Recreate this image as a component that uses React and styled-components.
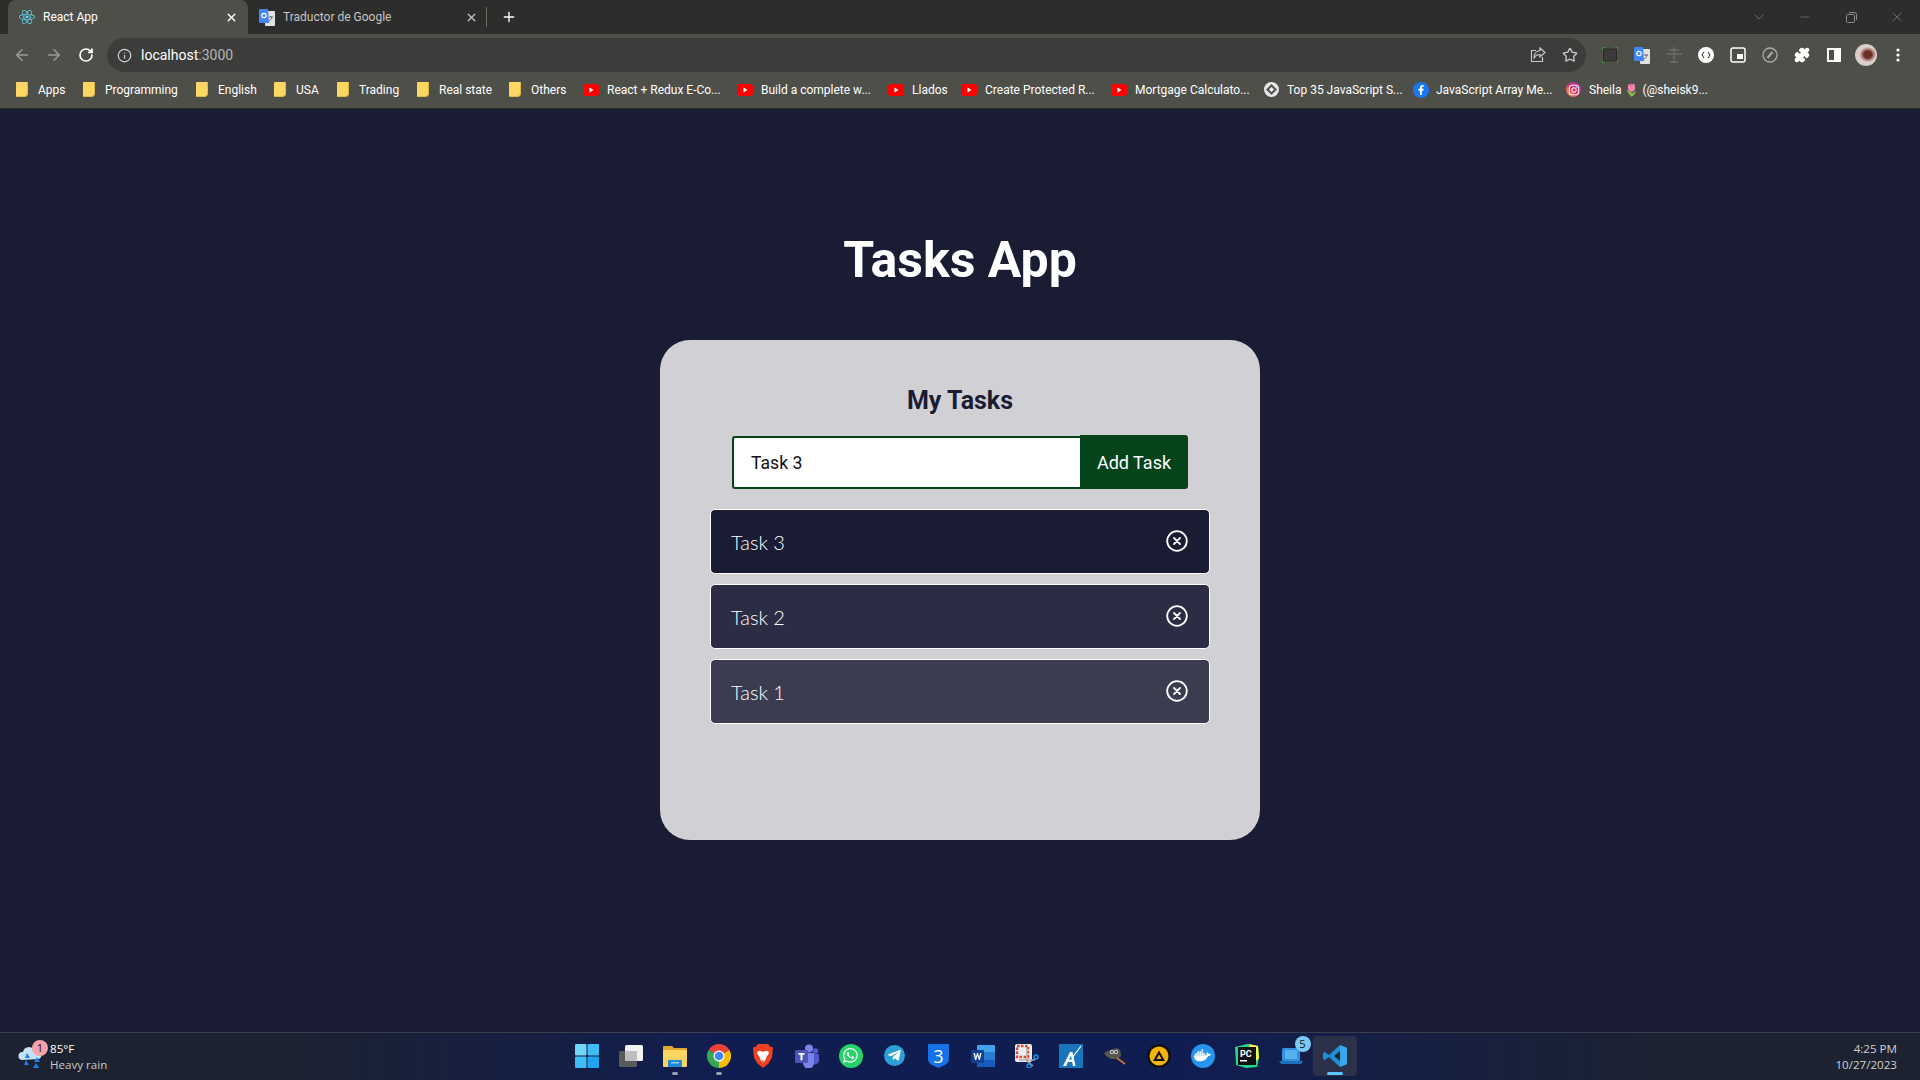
import React from "react";
import styled, { createGlobalStyle } from "styled-components";
import {
  ArrowLeft,
  ArrowRight,
  RotateCw,
  Info,
  Star,
  X,
  Plus,
  Minus,
  ChevronDown,
  Puzzle,
} from "lucide-react";
import { FaWhatsapp, FaTelegramPlane, FaDocker, FaFacebookF, FaInstagram, FaReact } from "react-icons/fa";

const GlobalStyle = createGlobalStyle`
  html, body { margin: 0; padding: 0; height: 100%; background: #1a1c33; overflow: hidden; }
  * { box-sizing: border-box; }
  #root { height: 100%; }
`;

const Page = styled.div`
  height: 100vh;
  display: flex;
  flex-direction: column;
  font-family: Roboto, "Liberation Sans", sans-serif;
`;

/* browser chrome */
const TabStrip = styled.div`
  height: 34px;
  flex: none;
  background: #2d2d2b;
  display: flex;
  padding-left: 8px;
  color: #fff;
`;

const Tab = styled.div`
  width: 240px;
  height: 34px;
  display: flex;
  align-items: center;
  padding: 0 10px 0 11px;
  gap: 8px;
  font-size: 12px;
  border-radius: 8px 8px 0 0;
  background: ${(p) => (p.$active ? "#4f4f4a" : "transparent")};
  color: ${(p) => (p.$active ? "#fff" : "#c4c4c2")};
  span { flex: 1; }
  svg.close { color: ${(p) => (p.$active ? "#fff" : "#bbb")}; }
`;

const TabDivider = styled.div`
  width: 1px;
  height: 20px;
  background: #6b6b68;
  align-self: center;
  margin-left: -2px;
`;

const NewTab = styled.div`
  width: 44px;
  display: flex;
  align-items: center;
  justify-content: center;
`;

const WindowControls = styled.div`
  margin-left: auto;
  display: flex;
  align-items: center;
  color: #8b8b89;
`;

const WindowButton = styled.div`
  width: 46px;
  height: 28px;
  display: flex;
  align-items: center;
  justify-content: center;
`;

const Toolbar = styled.div`
  height: 40px;
  flex: none;
  background: #4f4f4a;
  display: flex;
  align-items: center;
  padding: 2px 6px 0 6px;
  color: #fff;
`;

const ToolButton = styled.div`
  width: 32px;
  height: 32px;
  flex: none;
  display: flex;
  align-items: center;
  justify-content: center;
  color: ${(p) => p.$color || "#fff"};
`;

const UrlBar = styled.div`
  flex: 1;
  height: 34px;
  margin: 0 8px 0 5px;
  border-radius: 17px;
  background: #3c3c3a;
  display: flex;
  align-items: center;
  padding-left: 10px;
  font-size: 14px;
  color: #fff;
  em { font-style: normal; color: #b5b5b3; }
`;

const UrlText = styled.div`
  flex: 1;
  margin-left: 9px;
`;

const UrlIcon = styled.div`
  width: 32px;
  display: flex;
  justify-content: center;
  color: #c8c8c6;
`;

const Avatar = styled.div`
  width: 22px;
  height: 22px;
  border-radius: 50%;
  background: radial-gradient(ellipse at 58% 48%, #6b2f28 0 22%, #a8796f 32%, #ddd3ce 48%, #c7bbb6 100%);
`;

const BookmarkBar = styled.div`
  height: 35px;
  flex: none;
  background: #4f4f4a;
  border-bottom: 1px solid #2a2a2a;
  display: flex;
  align-items: center;
  padding: 0 0 3px 16px;
  color: #fff;
  font-size: 12px;
`;

const Bookmark = styled.div`
  width: ${(p) => p.$w}px;
  flex: none;
  display: flex;
  align-items: center;
  gap: ${(p) => p.$gap || 10}px;
  white-space: nowrap;
`;

const FolderIcon = styled.div`
  width: 12px;
  height: 15px;
  background: #fdd663;
  border-radius: 1px 1px 4px 1px;
  border-right: 1px solid #e2b945;
  border-bottom: 1px solid #e2b945;
`;

/* app */
const Main = styled.main`
  flex: 1;
  display: flex;
  flex-direction: column;
  align-items: center;
  padding-top: 123px;
  background: #1a1c33;
`;

const Title = styled.h1`
  margin: 0 0 52px;
  font-size: 50px;
  line-height: 56px;
  font-weight: 700;
  color: #fff;
`;

const Card = styled.section`
  width: 600px;
  height: 500px;
  border-radius: 30px;
  background: #d1d0d5;
  padding-top: 47px;
  display: flex;
  flex-direction: column;
  align-items: center;
`;

const CardTitle = styled.h2`
  margin: 0 0 20px;
  font-size: 25px;
  line-height: 28px;
  font-weight: 700;
  color: #1a1c33;
`;

const Form = styled.form`
  width: 456px;
  display: flex;
  align-items: flex-end;
  margin-bottom: 20px;
`;

const Input = styled.input`
  flex: 1;
  min-width: 0;
  height: 53px;
  border: 2px solid #05441a;
  border-right: none;
  border-radius: 3px 0 0 3px;
  padding: 0 0 0 17px;
  font-family: Roboto, sans-serif;
  font-size: 17.6px;
  color: #111;
  background: #fff;
  outline: none;
`;

const AddButton = styled.button`
  width: 108px;
  height: 54px;
  border: none;
  border-radius: 0 3px 3px 0;
  background: #05441a;
  color: #fff;
  font-family: Roboto, sans-serif;
  font-size: 18px;
  font-weight: 400;
  padding: 0;
`;

const TaskList = styled.ul`
  list-style: none;
  margin: 0;
  padding: 0;
  width: 500px;
  display: flex;
  flex-direction: column;
  gap: 10px;
`;

const TaskRow = styled.li`
  height: 65px;
  border: 1px solid #fff;
  border-radius: 5px;
  background: ${(p) => p.$bg};
  color: #fff;
  display: flex;
  align-items: center;
  justify-content: space-between;
  padding: 0 21px 0 20px;
  font-family: Lato, sans-serif;
  font-weight: 300;
  font-size: 20px;
`;

const RemoveIcon = styled.svg`
  width: 22px;
  height: 22px;
  margin-top: -2px;
  fill: none;
  stroke: #fff;
  stroke-width: 1.8;
  stroke-linecap: round;
`;

/* taskbar */
const Taskbar = styled.footer`
  height: 48px;
  flex: none;
  border-top: 1px solid #3b3c4c;
  background: linear-gradient(90deg, #1c2230 0%, #1c2230 14%, #101d50 38%, #101d50 62%, #1c2230 88%, #1c2230 100%);
  display: grid;
  grid-template-columns: 1fr auto 1fr;
  align-items: center;
  padding-bottom: 2px;
  font-family: "Open Sans", sans-serif;
  font-size: 11.6px;
  color: #fff;
`;

const Weather = styled.div`
  display: flex;
  align-items: center;
  gap: 6px;
  padding: 2px 0 0 18px;
  line-height: 16px;
`;

const WeatherIcon = styled.div`
  position: relative;
  width: 26px;
  height: 26px;
`;

const Badge = styled.span`
  position: absolute;
  top: ${(p) => p.$top}px;
  right: ${(p) => p.$right}px;
  width: 16px;
  height: 16px;
  border-radius: 50%;
  background: ${(p) => p.$bg};
  color: #111;
  font-size: 11px;
  line-height: 16px;
  text-align: center;
`;

const Muted = styled.div`
  color: #c9c9cc;
`;

const TaskIcons = styled.div`
  display: flex;
  align-items: center;
  margin-left: 1px;
`;

const TaskIcon = styled.div`
  position: relative;
  width: 44px;
  height: 40px;
  display: flex;
  align-items: center;
  justify-content: center;
  border-radius: 4px;
  background: ${(p) => (p.$active ? "#2a3149" : "transparent")};
  &::after {
    content: "";
    display: ${(p) => (p.$open || p.$active ? "block" : "none")};
    position: absolute;
    bottom: 1px;
    left: 50%;
    transform: translateX(-50%);
    width: ${(p) => (p.$active ? 16 : 6)}px;
    height: 3px;
    border-radius: 2px;
    background: ${(p) => (p.$active ? "#5cc8fa" : "#9aa0ae")};
  }
`;

const Clock = styled.div`
  justify-self: end;
  padding: 2px 23px 0 0;
  text-align: right;
  line-height: 16px;
  color: #d0d0d2;
`;

const Round = styled.div`
  width: ${(p) => p.$size || 24}px;
  height: ${(p) => p.$size || 24}px;
  border-radius: 50%;
  background: ${(p) => p.$bg};
  color: #fff;
  display: flex;
  align-items: center;
  justify-content: center;
  font-size: ${(p) => (p.$size || 24) * 0.7}px;
`;

const ShieldWrap = styled.div`
  position: relative;
  width: 21px;
  height: 24px;
  display: flex;
  align-items: center;
  justify-content: center;
  color: #fff;
  font-size: 18px;
  font-weight: 500;
  svg { position: absolute; inset: 0; }
  span { position: relative; }
`;

const Youtube = () => (
  <svg width="16" height="12" viewBox="0 0 16 12">
    <rect width="16" height="12" rx="3" fill="#f00" />
    <path d="M6.5 3.6 10.5 6l-4 2.4z" fill="#fff" />
  </svg>
);

const GoogleTranslate = () => (
  <svg width="16" height="17" viewBox="0 0 16 17">
    <rect x="6" y="2" width="10" height="15" rx="1" fill="#dfe1e5" />
    <path d="M1 0h8l1 14H1a1 1 0 0 1-1-1V1a1 1 0 0 1 1-1z" fill="#4285f4" />
    <circle cx="5" cy="6.5" r="2.2" fill="none" stroke="#fff" strokeWidth="1.2" />
    <path d="M10 8h4M12 7v1M13 8c-.5 2-1.500 3-3 4" stroke="#666" fill="none" />
  </svg>
);

const Chrome = () => (
  <svg width="24" height="24" viewBox="0 0 24 24">
    <path d="M12 12 1.600 6A12 12 0 0 1 22.400 6z" fill="#ea4335" />
    <path d="M12 12 22.400 6A12 12 0 0 1 12 24z" fill="#fbbc04" />
    <path d="M12 12 12 24A12 12 0 0 1 1.600 6z" fill="#34a853" />
    <circle cx="12" cy="12" r="5.500" fill="#fff" />
    <circle cx="12" cy="12" r="4.300" fill="#4285f4" />
  </svg>
);

const WindowsLogo = () => (
  <svg width="24" height="24" viewBox="0 0 24 24">
    <rect width="11.500" height="11.500" rx="1" fill="#6fd6f8" />
    <rect x="12.500" width="11.500" height="11.500" rx="1" fill="#3fbdf5" />
    <rect y="12.500" width="11.500" height="11.500" rx="1" fill="#3fbdf5" />
    <rect x="12.500" y="12.500" width="11.500" height="11.500" rx="1" fill="#1ea5ee" />
  </svg>
);

const TaskView = () => (
  <svg width="24" height="24" viewBox="0 0 24 24">
    <rect x="6" y="1" width="18" height="16" rx="1.500" fill="#f2f2f2" />
    <rect x="0" y="7" width="18" height="16" rx="1.500" fill="#5a5a5a" />
    <rect x="6" y="7" width="12" height="10" fill="#bdbdbd" />
  </svg>
);

const Explorer = () => (
  <svg width="24" height="24" viewBox="0 0 24 24">
    <path d="M0 3a1 1 0 0 1 1-1h8l2 2h12a1 1 0 0 1 1 1v17H0z" fill="#e0a82e" />
    <rect y="6" width="24" height="17" rx="1" fill="#fcd462" />
    <rect x="5" y="16" width="14" height="7" rx="1" fill="#1e88d8" />
    <rect x="8" y="18" width="8" height="1.500" fill="#8fd0f8" />
  </svg>
);

const Brave = () => (
  <svg width="20" height="24" viewBox="0 0 20 24">
    <path d="M5 0h10l2 2.500 3 1-1 10-3.500 6L10 24l-5.500-4.500L1 13.500 0 3.500l3-1z" fill="#f1401f" />
    <path d="M5 7h3l2 1 2-1h3l1 2-3 5-1 3-2 2-2-2-1-3-3-5z" fill="#fff" />
    <path d="M8.500 16.500h3L10 19z" fill="#f1401f" />
  </svg>
);

const Teams = () => (
  <svg width="24" height="24" viewBox="0 0 24 24">
    <circle cx="14" cy="4.500" r="4" fill="#7b83eb" />
    <circle cx="20.500" cy="7" r="2.800" fill="#5059c9" />
    <path d="M17 10h7v7a4 4 0 0 1-7 2z" fill="#5059c9" />
    <path d="M8 9h11v10a5.500 5.500 0 0 1-11 0z" fill="#7b83eb" />
    <rect x="0" y="6" width="13" height="13" rx="1.500" fill="#4b53bc" />
    <path d="M3.500 9h6v1.800H7.500v5.500h-2v-5.500h-2z" fill="#fff" />
  </svg>
);

const Word = () => (
  <svg width="24" height="24" viewBox="0 0 24 24">
    <rect x="6" y="1" width="18" height="22" rx="1" fill="#41a5ee" />
    <rect x="6" y="8" width="18" height="7.500" fill="#2b7cd3" />
    <rect x="6" y="15.500" width="18" height="7.500" fill="#185abd" />
    <rect x="0" y="6" width="13" height="13" rx="1" fill="#103f91" />
    <path d="M2.500 9l1.500 7h1.200l1.300-4.500 1.300 4.500H9l1.500-7H9l-.8 4.500L7 9H6l-1.200 4.500L4 9z" fill="#fff" />
  </svg>
);

const Snip = () => (
  <svg width="24" height="24" viewBox="0 0 24 24">
    <rect width="17" height="18" rx="2" fill="#eee" />
    <rect x="2" y="2" width="11" height="11" fill="none" stroke="#e0452c" strokeWidth="2.500" strokeDasharray="2.500 1.500" />
    <path d="M12 4v13l6 5M4 16h16" stroke="#aaa" strokeWidth="1.500" fill="none" />
    <circle cx="21" cy="13" r="2" fill="none" stroke="#1e90e0" strokeWidth="1.500" />
    <circle cx="14" cy="22" r="2" fill="none" stroke="#1e90e0" strokeWidth="1.500" />
  </svg>
);

const Arch = () => (
  <svg width="24" height="24" viewBox="0 0 24 24">
    <rect width="24" height="24" fill="#1976bd" />
    <path d="M4 22 11 8h2.500l3 14H14l-.8-4H9l-2 4zM10 15.500h2.800L12 11.500z" fill="#fff" fillRule="evenodd" />
    <path d="M13 14 22 2" stroke="#fff" strokeWidth="1.200" />
  </svg>
);

const Gimp = () => (
  <svg width="24" height="20" viewBox="0 0 24 20">
    <path d="M1 7l6-3 7-2 3 2 1 6-4 3H8L3 10z" fill="#5a5750" />
    <circle cx="9" cy="6" r="2" fill="#ddd" />
    <circle cx="13" cy="6" r="2" fill="#ddd" />
    <circle cx="9" cy="6" r=".9" fill="#111" />
    <circle cx="13" cy="6" r=".9" fill="#111" />
    <path d="M14 12l8 6" stroke="#c8752d" strokeWidth="1.800" />
  </svg>
);

const Amp = () => (
  <svg width="24" height="24" viewBox="0 0 24 24">
    <circle cx="12" cy="12" r="12" fill="#111" />
    <circle cx="12" cy="12" r="9.500" fill="#f5b50e" />
    <path d="M12 6.500 18 17H6zM12 10.500 9.500 15h5z" fill="#111" fillRule="evenodd" />
  </svg>
);

const PyCharm = () => (
  <svg width="24" height="24" viewBox="0 0 24 24">
    <path d="M0 3l12-3 11 2 1 12-2 9-11 1-10-3z" fill="#21d789" />
    <path d="M14 0l9 2 1 12-4 4z" fill="#fcf84a" />
    <rect x="3" y="3" width="18" height="18" fill="#111" />
    <text x="5" y="13" fontSize="9" fontFamily="Roboto, sans-serif" fontWeight="700" fill="#fff">PC</text>
    <rect x="5" y="16" width="7" height="1.500" fill="#fff" />
  </svg>
);

const Outlook = () => (
  <svg width="24" height="24" viewBox="0 0 24 24">
    <rect x="3" y="4" width="18" height="13" rx="1.500" fill="#2f8fe0" />
    <path d="M0 17h24l-2 3H2z" fill="#1f6fbd" />
    <rect x="6" y="6" width="12" height="9" fill="#56b1f0" />
  </svg>
);

const VsCode = () => (
  <svg width="24" height="24" viewBox="0 0 24 24">
    <path d="M17 1 24 4v16l-7 3L6 13l-4 3-2-1V9l2-1 4 3z" fill="#1e8ed6" />
    <path d="M17 1 24 4v16l-7 3z" fill="#3aa6ec" />
    <path d="M17 7v10l-6-5z" fill="#1a2236" />
  </svg>
);

const WeatherGlyph = () => (
  <svg width="26" height="26" viewBox="0 0 26 26">
    <path d="M4 16a4 4 0 0 1 1-8 6 6 0 0 1 11-2 5 5 0 0 1 5 9z" fill="#c5e3f8" />
    <path d="M9 9l3 5H7zM8 16l3 5H6zM19 13l3 5h-6zM18 19l3 5h-6z" fill="#1f7fee" />
  </svg>
);

const ShareGlyph = () => (
  <svg width="16" height="16" viewBox="0 0 16 16" fill="none" stroke="currentColor" strokeWidth="1.200">
    <path d="M6 3.500H1.500v11h11V10" />
    <path d="M10 1l5 4.500L10 10V7.500C7 7.500 5 9 4 11.500 4 7 6.500 3.800 10 3.500z" />
  </svg>
);

const CssShield = () => (
  <ShieldWrap>
    <svg width="21" height="24" viewBox="0 0 21 24">
      <path d="M0 0h21v15c0 3-2 5-4 6l-6.500 3L4 21c-2-1-4-3-4-6z" fill="#1572e8" />
    </svg>
    <span>3</span>
  </ShieldWrap>
);

const bookmarks = [
  { name: "Apps", w: 67 },
  { name: "Programming", w: 113 },
  { name: "English", w: 78 },
  { name: "USA", w: 63 },
  { name: "Trading", w: 80 },
  { name: "Real state", w: 92 },
  { name: "Others", w: 74 },
  { name: "React + Redux E-Co...", w: 154, icon: <Youtube />, gap: 8 },
  { name: "Build a complete w...", w: 151, icon: <Youtube />, gap: 8 },
  { name: "Llados", w: 73, icon: <Youtube />, gap: 8 },
  { name: "Create Protected R...", w: 150, icon: <Youtube />, gap: 8 },
  { name: "Mortgage Calculato...", w: 153, icon: <Youtube />, gap: 8 },
  { name: "Top 35 JavaScript S...", w: 149, icon: <Round $size={15} $bg="#e8e8e8"><svg width="11" height="11" viewBox="0 0 11 11"><path d="M5.500 0 11 5.500 5.500 11 0 5.500z" fill="#555" /><path d="M5.500 3 8 5.500 5.500 8 3 5.500z" fill="#eee" /></svg></Round>, gap: 8 },
  { name: "JavaScript Array Me...", w: 153, icon: <Round $size={16} $bg="#1877f2"><FaFacebookF size={10} /></Round>, gap: 7 },
  { name: "Sheila 🌷 (@sheisk9...", w: 150, icon: <Round $size={15} $bg="linear-gradient(45deg,#fcb045,#e1306c,#833ab4)"><FaInstagram size={12} /></Round>, gap: 8 },
];

const tasks = [
  { name: "Task 3", bg: "#1a1c33" },
  { name: "Task 2", bg: "#2c2c44" },
  { name: "Task 1", bg: "#3c3c50" },
];

const dock = [
  { icon: <WindowsLogo /> },
  { icon: <TaskView /> },
  { icon: <Explorer />, open: true },
  { icon: <Chrome />, open: true },
  { icon: <Brave /> },
  { icon: <Teams /> },
  { icon: <Round $bg="#25d366"><FaWhatsapp /></Round> },
  { icon: <Round $size={21} $bg="#2a9fd8"><FaTelegramPlane /></Round> },
  { icon: <CssShield /> },
  { icon: <Word /> },
  { icon: <Snip /> },
  { icon: <Arch /> },
  { icon: <Gimp /> },
  { icon: <Amp /> },
  { icon: <Round $bg="#2496ed"><FaDocker /></Round> },
  { icon: <PyCharm /> },
  { icon: <Outlook />, badge: "5" },
  { icon: <VsCode />, active: true },
];

const RemoveGlyph = () => (
  <RemoveIcon viewBox="0 0 22 22">
    <circle cx="11" cy="11" r="9.800" />
    <path d="M8 8l6 6M14 8l-6 6" />
  </RemoveIcon>
);

export default function App() {
  return (
    <Page>
      <GlobalStyle />
      <TabStrip>
        <Tab $active>
          <FaReact size={16} color="#61dafb" />
          <span>React App</span>
          <X className="close" size={13} strokeWidth={2.5} />
        </Tab>
        <Tab>
          <GoogleTranslate />
          <span>Traductor de Google</span>
          <X className="close" size={13} strokeWidth={2.5} />
        </Tab>
        <TabDivider />
        <NewTab>
          <Plus size={16} strokeWidth={2} />
        </NewTab>
        <WindowControls>
          <WindowButton><ChevronDown size={16} strokeWidth={1} /></WindowButton>
          <WindowButton><Minus size={14} strokeWidth={1} /></WindowButton>
          <WindowButton>
            <svg width="11" height="11" viewBox="0 0 11 11" fill="none" stroke="currentColor">
              <rect x=".5" y="2.500" width="8" height="8" rx="1" />
              <path d="M3 .5h5.500a2 2 0 0 1 2 2V8" />
            </svg>
          </WindowButton>
          <WindowButton><X size={16} strokeWidth={1} /></WindowButton>
        </WindowControls>
      </TabStrip>

      <Toolbar>
        <ToolButton $color="#9a9a97"><ArrowLeft size={18} /></ToolButton>
        <ToolButton $color="#9a9a97"><ArrowRight size={18} /></ToolButton>
        <ToolButton><RotateCw size={16} strokeWidth={2.5} /></ToolButton>
        <UrlBar>
          <Info size={15} color="#cfcfcd" />
          <UrlText>localhost<em>:3000</em></UrlText>
          <UrlIcon><ShareGlyph /></UrlIcon>
          <UrlIcon><Star size={16} /></UrlIcon>
        </UrlBar>
        <ToolButton>
          <svg width="16" height="16" viewBox="0 0 16 16" fill="none">
            <rect x="1.500" y="2" width="13" height="12" fill="#3a3a38" stroke="#2b2b29" />
            <path d="M.5 3V.5h2.500M13 .5h2.500V3M.5 13v2.500H3M13 15.500h2.500V13" stroke="#3f8a35" />
          </svg>
        </ToolButton>
        <ToolButton><GoogleTranslate /></ToolButton>
        <ToolButton $color="#777">
          <svg width="16" height="16" viewBox="0 0 16 16" fill="none" stroke="currentColor">
            <path d="M8 0v16M4 15h8M0 7h16M3 3h10" />
          </svg>
        </ToolButton>
        <ToolButton>
          <Round $size={16} $bg="#fff">
            <svg width="10" height="10" viewBox="0 0 10 10" fill="none" stroke="#222"><path d="M3 2 1 5l2 3M7 2l2 3-2 3" /></svg>
          </Round>
        </ToolButton>
        <ToolButton>
          <svg width="16" height="16" viewBox="0 0 16 16" fill="none">
            <rect x="1" y="1" width="14" height="14" rx="2" stroke="#fff" strokeWidth="1.500" />
            <rect x="7" y="7" width="6" height="5" fill="#fff" />
          </svg>
        </ToolButton>
        <ToolButton $color="#aaa">
          <svg width="16" height="16" viewBox="0 0 16 16" fill="none" stroke="currentColor" strokeWidth="1.300">
            <circle cx="8" cy="8" r="7" />
            <path d="M5.500 11 10.500 5" strokeWidth="2" />
          </svg>
        </ToolButton>
        <ToolButton><Puzzle size={16} fill="#fff" /></ToolButton>
        <ToolButton>
          <svg width="14" height="14" viewBox="0 0 14 14"><path d="M0 0h14v14H0zM2 2v10h5V2z" fill="#fff" fillRule="evenodd" /></svg>
        </ToolButton>
        <ToolButton><Avatar /></ToolButton>
        <ToolButton>
          <svg width="4" height="16" viewBox="0 0 4 16" fill="#fff">
            <circle cx="2" cy="3" r="1.600" />
            <circle cx="2" cy="8" r="1.600" />
            <circle cx="2" cy="13" r="1.600" />
          </svg>
        </ToolButton>
      </Toolbar>

      <BookmarkBar>
        {bookmarks.map((b) => (
          <Bookmark key={b.name} $w={b.w} $gap={b.gap}>
            {b.icon || <FolderIcon />}
            {b.name}
          </Bookmark>
        ))}
      </BookmarkBar>

      <Main>
        <Title>Tasks App</Title>
        <Card>
          <CardTitle>My Tasks</CardTitle>
          <Form>
            <Input value="Task 3" readOnly />
            <AddButton type="button">Add Task</AddButton>
          </Form>
          <TaskList>
            {tasks.map((t) => (
              <TaskRow key={t.name} $bg={t.bg}>
                {t.name}
                <RemoveGlyph />
              </TaskRow>
            ))}
          </TaskList>
        </Card>
      </Main>

      <Taskbar>
        <Weather>
          <WeatherIcon>
            <WeatherGlyph />
            <Badge $top={-4} $right={-4} $bg="#f7a1a8">1</Badge>
          </WeatherIcon>
          <div>
            <div>85°F</div>
            <Muted>Heavy rain</Muted>
          </div>
        </Weather>
        <TaskIcons>
          {dock.map((d, i) => (
            <TaskIcon key={i} $open={d.open} $active={d.active}>
              {d.icon}
              {d.badge && <Badge $top={0} $right={2} $bg="#7cc8f5">{d.badge}</Badge>}
            </TaskIcon>
          ))}
        </TaskIcons>
        <Clock>
          <div>4:25 PM</div>
          <div>10/27/2023</div>
        </Clock>
      </Taskbar>
    </Page>
  );
}
